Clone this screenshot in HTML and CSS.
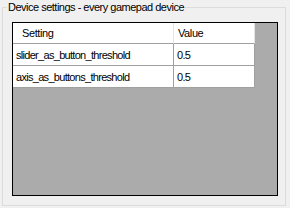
FILE: index.html
```html
<!DOCTYPE html>
<html lang="en">
<head>
    <meta charset="UTF-8">
    <title>Device settings</title>
    <link rel="stylesheet" href="styles.css">
</head>
<body>
    <fieldset class="group">
        <legend>Device settings - every gamepad device</legend>
        <div class="grid">
            <div class="row head">
                <div class="cell name">Setting</div>
                <div class="cell val">Value</div>
            </div>
            <div class="row">
                <div class="cell name">slider_as_button_threshold</div>
                <div class="cell val">0.5</div>
            </div>
            <div class="row">
                <div class="cell name">axis_as_buttons_threshold</div>
                <div class="cell val">0.5</div>
            </div>
        </div>
    </fieldset>
</body>
</html>
```

FILE: styles.css
```css
* {
    box-sizing: border-box;
}

body {
    margin: 0;
    width: 290px;
    height: 208px;
    background-color: #f0f0f0;
    font-family: "Liberation Sans", Arial, sans-serif;
    font-size: 11px;
    letter-spacing: -0.5px;
    color: #000;
}

.group {
    margin: 0 0 0 2px;
    width: 284px;
    height: 206px;
    padding: 8px 0 0 0;
    border: 1px solid #dcdcdc;
}

.group legend {
    margin-left: 4px;
    padding: 0 1px;
    line-height: 14px;
}

.grid {
    margin-left: 9px;
    width: 266px;
    height: 174px;
    border: 1px solid #000;
    background-color: #ababab;
}

.row {
    display: flex;
    height: 22px;
}

.row.head {
    height: 21px;
}

.cell {
    background-color: #fff;
    border-right: 1px solid #a0a0a0;
    border-bottom: 1px solid #a0a0a0;
    display: flex;
    align-items: center;
    white-space: nowrap;
    overflow: hidden;
    letter-spacing: -0.7px;
}

.cell.name {
    width: 161px;
    padding-left: 3px;
}

.cell.val {
    width: 81px;
    padding-left: 3px;
}

.head .cell {
    border-right-color: #e5e5e5;
    letter-spacing: -0.4px;
}

.head .cell.name {
    padding-left: 9px;
}

.head .cell.val {
    padding-left: 4px;
}
```
